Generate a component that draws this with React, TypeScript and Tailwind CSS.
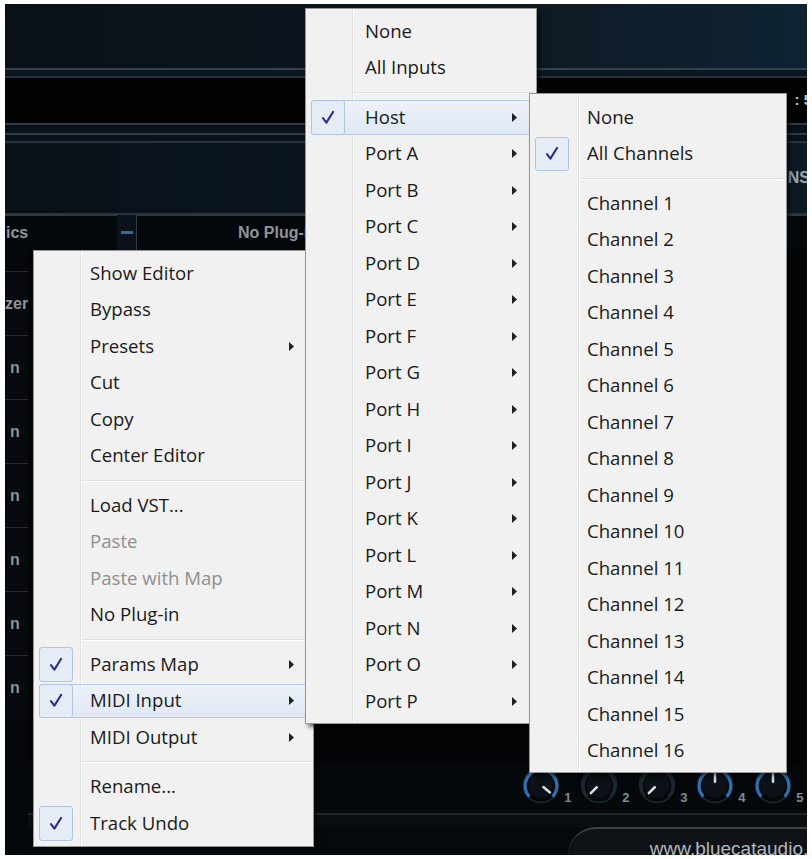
import React from "react";

type Entry = {
  label: string;
  checked?: boolean;
  arrow?: boolean;
  disabled?: boolean;
  active?: boolean;
};
type Item = Entry | "sep";

const leftItems: Item[] = [
  { label: "Show Editor" },
  { label: "Bypass" },
  { label: "Presets", arrow: true },
  { label: "Cut" },
  { label: "Copy" },
  { label: "Center Editor" },
  "sep",
  { label: "Load VST..." },
  { label: "Paste", disabled: true },
  { label: "Paste with Map", disabled: true },
  { label: "No Plug-in" },
  "sep",
  { label: "Params Map", checked: true, arrow: true },
  { label: "MIDI Input", checked: true, arrow: true, active: true },
  { label: "MIDI Output", arrow: true },
  "sep",
  { label: "Rename..." },
  { label: "Track Undo", checked: true },
];

const ports = "ABCDEFGHIJKLMNOP".split("");

const midiItems: Item[] = [
  { label: "None" },
  { label: "All Inputs" },
  "sep",
  { label: "Host", checked: true, arrow: true, active: true },
  ...ports.map((p) => ({ label: `Port ${p}`, arrow: true })),
];

const channelItems: Item[] = [
  { label: "None" },
  { label: "All Channels", checked: true },
  "sep",
  ...Array.from({ length: 16 }, (_, i) => ({ label: `Channel ${i + 1}` })),
];

function Check() {
  return (
    <svg width="14" height="15" viewBox="0 0 14 15" fill="none">
      <path
        d="M2 8.2 L5.4 12.6 L12.2 1.8"
        stroke="#2c2b8e"
        strokeWidth="2.1"
        strokeLinecap="round"
        strokeLinejoin="round"
      />
    </svg>
  );
}

function Arrow() {
  return (
    <svg width="5" height="9" viewBox="0 0 5 9" className="absolute right-[19px]">
      <path d="M0 0 L5 4.5 L0 9 Z" fill="#1f1f1f" />
    </svg>
  );
}

function Menu({
  items,
  className,
  gutter,
  textPad,
  sepPad,
}: {
  items: Item[];
  className: string;
  gutter: string;
  textPad: string;
  sepPad: string;
}) {
  return (
    <div
      className={`absolute border border-[#979797] bg-[#f1f1f1] shadow-[3px_3px_4px_rgba(0,0,0,0.55)] ${className}`}
    >
      {/* gutter divider */}
      <div className={`absolute top-0 bottom-0 w-[2px] border-l border-[#e2e3e3] border-r border-r-white ${gutter}`} />
      {items.map((it, i) =>
        it === "sep" ? (
          <div key={i} className={`relative flex h-[13px] items-center pr-[3px] ${sepPad}`}>
            <div className="h-[2px] w-full border-t border-[#e0e0e0] border-b border-b-white" />
          </div>
        ) : (
          <div key={i} className="relative flex h-[36.5px] items-center">
            {it.active && (
              <div className="absolute inset-y-px left-[5px] right-[6px] rounded-[3px] border border-[#b4cbe8] bg-gradient-to-b from-[#edf2f9] to-[#dfe8f4]" />
            )}
            {it.checked && (
              <div className="absolute inset-y-px left-[5px] flex w-[34px] items-center justify-center rounded-[3px] border border-[#adc5e5] bg-[#e6ecf5]">
                <Check />
              </div>
            )}
            <span
              className={`relative whitespace-nowrap text-[18.6px] leading-none ${textPad} ${
                it.disabled ? "text-[#8f8f8f]" : "text-[#1a1a1a]"
              }`}
            >
              {it.label}
            </span>
            {it.arrow && <Arrow />}
          </div>
        )
      )}
    </div>
  );
}

function Knob({ ring, angle }: { ring: string; angle: number }) {
  const rad = ((angle - 90) * Math.PI) / 180;
  const x2 = 18 + Math.cos(rad) * 11;
  const y2 = 18 + Math.sin(rad) * 11;
  const x1 = 18 + Math.cos(rad) * 3;
  const y1 = 18 + Math.sin(rad) * 3;
  return (
    <svg width="38" height="38" viewBox="0 0 36 36">
      <circle cx="18" cy="18" r="16.5" fill="#05080b" stroke="#1b2630" strokeWidth="1.5" />
      <path d="M7 29 A15 15 0 1 1 29 29" fill="none" stroke={ring} strokeWidth="3" />
      <circle cx="18" cy="18" r="12" fill="#0b1117" />
      <line x1={x1} y1={y1} x2={x2} y2={y2} stroke="#d9dde0" strokeWidth="2.4" strokeLinecap="round" />
    </svg>
  );
}

const knobs = [
  { ring: "#2f6fae", angle: 130, n: "1" },
  { ring: "#1c262f", angle: 225, n: "2" },
  { ring: "#1c262f", angle: 225, n: "3" },
  { ring: "#2f6fae", angle: 0, n: "4" },
  { ring: "#2f6fae", angle: 0, n: "5" },
];

const sideRows = ["zer", "n", "n", "n", "n", "n", "n"];

export default function App() {
  return (
    <div className="h-[859px] w-[812px] bg-white pb-[4px] pl-[5px] pr-[5px] pt-[4px] font-['Open_Sans',sans-serif]">
      <div className="relative flex h-full w-full flex-col overflow-hidden bg-[#04070a]">
        {/* top header bands */}
        <div className="h-[64px] bg-gradient-to-r from-[#0a1017] via-[#0c161f] to-[#0f2332]" />
        <div className="h-[2px] bg-[#34424e]" />
        <div className="h-[6px] bg-[#0d1721]" />
        <div className="h-[2px] bg-[#26333e]" />
        <div className="flex h-[45px] items-center justify-end overflow-hidden bg-[#020305]">
          <span className="-mr-[5px] font-['Liberation_Sans',sans-serif] text-[15px] font-bold text-[#c3c7cb]">: 5</span>
        </div>
        <div className="h-[2px] bg-[#2f3c48]" />
        <div className="h-[8px] bg-[#0a1219]" />
        <div className="h-[2px] bg-[#2f3c48]" />
        <div className="h-[6px] bg-[#0a1219]" />
        <div className="h-[2px] bg-[#27343f]" />
        <div className="flex h-[70px] items-center justify-end overflow-hidden bg-gradient-to-r from-[#091118] to-[#0c1a26]">
          <span className="-mr-[3px] font-['Liberation_Sans',sans-serif] text-[16px] font-bold text-[#9aa3ab]">NS</span>
        </div>
        <div className="h-[2px] bg-[#283540]" />

        {/* slot header row */}
        <div className="flex h-[35px] bg-[#05080b] font-['Liberation_Sans',sans-serif] text-[16px] font-bold text-[#8e949a]">
          <div className="flex w-[112px] items-center border-t border-[#2e3b47] pl-[1px]">ics</div>
          <div className="flex w-[19px] flex-col items-center justify-center bg-[#0a1118]">
            <div className="h-[3px] w-[12px] bg-[#2d6aa3]" />
          </div>
          <div className="flex flex-1 items-center border-t border-l border-[#2e3b47] pl-[101px]">No Plug-in</div>
        </div>

        {/* body */}
        <div className="flex flex-1">
          <div className="flex w-[28px] flex-col bg-[#05080b] pt-[21px]">
            {sideRows.map((t, i) => (
              <div
                key={i}
                className="flex h-[64px] items-center border-t border-[#1f2a34] bg-[#060a0e] font-['Liberation_Sans',sans-serif] text-[16px] font-bold text-[#8e949a]"
              >
                <span className={i === 0 ? "pl-0" : "pl-[5px]"}>{t}</span>
              </div>
            ))}
          </div>
          <div className="flex flex-1 flex-col">
            <div className="flex-1 bg-[#030507]" />
            {/* knob row */}
            <div className="flex h-[44px] items-center gap-[2px] bg-[#05080b] pl-[494px]">
              {knobs.map((k) => (
                <div key={k.n} className="flex items-end">
                  <Knob ring={k.ring} angle={k.angle} />
                  <span className="w-[18px] pl-[4px] font-['Liberation_Sans',sans-serif] text-[13px] font-bold leading-none text-[#7f8a93]">
                    {k.n}
                  </span>
                </div>
              ))}
            </div>
            {/* footer */}
            <div className="flex h-[48px] flex-col bg-[#06090c]">
              <div className="h-[6px]" />
              <div className="h-[2px] bg-[#20262b]" />
              <div className="h-[12px] bg-[#0a0e11]" />
              <div className="ml-[540px] flex flex-1 items-end justify-end overflow-hidden rounded-tl-[90px] border-t-2 border-[#3b4147] bg-[#0f1317]">
                <span className="-mb-[8px] -mr-[34px] font-['Liberation_Sans',sans-serif] text-[19px] text-[#b4b9bd]">
                  www.bluecataudio.com
                </span>
              </div>
            </div>
          </div>
        </div>

        <Menu
          items={leftItems}
          className="left-[28px] top-[246px] z-10 w-[281px] py-[4px]"
          gutter="left-[46px]"
          textPad="pl-[56px]"
          sepPad="pl-[48px]"
        />
        <Menu
          items={midiItems}
          className="left-[300px] top-[4px] z-20 w-[232px] pt-[4px] pb-[3px]"
          gutter="left-[46px]"
          textPad="pl-[59px]"
          sepPad="pl-[48px]"
        />
        <Menu
          items={channelItems}
          className="left-[524px] top-[89px] z-30 w-[258px] pt-[5px] pb-[3px]"
          gutter="left-[48px]"
          textPad="pl-[57px]"
          sepPad="pl-[50px]"
        />
      </div>
    </div>
  );
}
